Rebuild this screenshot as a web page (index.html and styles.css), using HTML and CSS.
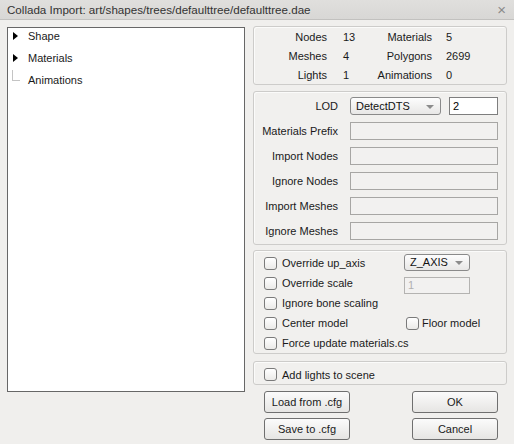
FILE: index.html
```html
<!DOCTYPE html>
<html>
<head>
<meta charset="utf-8">
<link rel="stylesheet" href="styles.css">
</head>
<body>
<div class="titlebar">
  <span class="title">Collada Import: art/shapes/trees/defaulttree/defaulttree.dae</span>
  <span class="close">×</span>
</div>
<div class="main">
  <div class="tree">
    <div class="node"><span class="arrow"></span><span class="label">Shape</span></div>
    <div class="node"><span class="arrow"></span><span class="label">Materials</span></div>
    <div class="node leaf"><span class="branch"></span><span class="label">Animations</span></div>
  </div>
  <div class="side">
    <div class="panel stats">
      <span class="sl c1">Nodes</span><span class="sv c2">13</span><span class="sl c3">Materials</span><span class="sv c4">5</span>
      <span class="sl c1">Meshes</span><span class="sv c2">4</span><span class="sl c3">Polygons</span><span class="sv c4">2699</span>
      <span class="sl c1">Lights</span><span class="sv c2">1</span><span class="sl c3">Animations</span><span class="sv c4">0</span>
    </div>
    <div class="panel opts">
      <div class="orow"><span class="olabel">LOD</span>
        <div class="lodfields"><div class="select lodsel"><span>DetectDTS</span><span class="caret"></span></div><div class="field enabled">2</div></div>
      </div>
      <div class="orow"><span class="olabel">Materials Prefix</span><div class="field"></div></div>
      <div class="orow"><span class="olabel">Import Nodes</span><div class="field"></div></div>
      <div class="orow"><span class="olabel">Ignore Nodes</span><div class="field"></div></div>
      <div class="orow"><span class="olabel">Import Meshes</span><div class="field"></div></div>
      <div class="orow"><span class="olabel">Ignore Meshes</span><div class="field"></div></div>
    </div>
    <div class="panel checks">
      <label class="cb"><span class="box"></span>Override up_axis</label>
      <div class="col2"><div class="select axissel"><span>Z_AXIS</span><span class="caret"></span></div></div>
      <label class="cb"><span class="box"></span>Override scale</label>
      <div class="col2"><div class="field scale">1</div></div>
      <label class="cb full"><span class="box"></span>Ignore bone scaling</label>
      <label class="cb"><span class="box"></span>Center model</label>
      <label class="cb floor"><span class="box"></span>Floor model</label>
      <label class="cb full"><span class="box"></span>Force update materials.cs</label>
    </div>
    <div class="panel lights">
      <label class="cb"><span class="box"></span>Add lights to scene</label>
    </div>
    <div class="buttons">
      <button class="btn">Load from .cfg</button>
      <button class="btn">OK</button>
      <button class="btn">Save to .cfg</button>
      <button class="btn">Cancel</button>
    </div>
  </div>
</div>
</body>
</html>
```

FILE: styles.css
```css
* { box-sizing: border-box; }
html, body {
  margin: 0;
  padding: 0;
  width: 514px;
  height: 444px;
  overflow: hidden;
  background: #f0efed;
  font-family: "Liberation Sans", Arial, sans-serif;
  font-size: 11px;
  color: #1a1a1a;
}
.titlebar {
  height: 20px;
  background: linear-gradient(#e0dfdd, #d8d7d5);
  border-bottom: 1px solid #c2c1bf;
  display: flex;
  align-items: center;
  justify-content: space-between;
  padding: 0 8px 0 7px;
}
.title { font-size: 11.6px; color: #333; }
.close { font-size: 15px; color: #8a8a8a; line-height: 1; }
.main {
  display: flex;
  padding-left: 7px;
  gap: 8px;
}
.tree {
  margin-top: 7px;
  width: 238px;
  height: 365px;
  background: #fff;
  border: 1px solid #676767;
  display: flex;
  flex-direction: column;
  gap: 6px;
}
.node {
  height: 16px;
  line-height: 16px;
  position: relative;
  padding-left: 20px;
}
.arrow {
  position: absolute;
  left: 5px;
  top: 4px;
  width: 0;
  height: 0;
  border-top: 4px solid transparent;
  border-bottom: 4px solid transparent;
  border-left: 5px solid #000;
}
.branch {
  position: absolute;
  left: 4px;
  top: -2px;
  width: 8px;
  height: 11px;
  border-left: 1px solid #c4c4c4;
  border-bottom: 1px solid #c4c4c4;
}
.side {
  margin-top: 6px;
  width: 254px;
  display: flex;
  flex-direction: column;
}
.panel {
  border: 1px solid #cdccca;
  border-radius: 3px;
  box-shadow: inset 1px 1px 0 #fbfbfa;
  background: #f1f0ee;
}
.stats {
  height: 59px;
  display: grid;
  grid-template-columns: 73px 35px 70px 1fr;
  grid-template-rows: 19px 19px 19px;
  line-height: 19px;
  padding-top: 1px;
}
.sl { text-align: right; }
.c2 { padding-left: 16px; }
.c4 { padding-left: 14px; }
.opts {
  margin-top: 6px;
  height: 154px;
  padding: 5px 7px 0 0;
  display: flex;
  flex-direction: column;
  gap: 7px;
}
.orow {
  display: flex;
  align-items: center;
  height: 18px;
}
.olabel {
  width: 84px;
  text-align: right;
  margin-right: 12px;
  flex-shrink: 0;
}
.field {
  width: 148px;
  height: 18px;
  border: 1px solid #a7a6a4;
  background: #f2f1f0;
  line-height: 16px;
  padding-left: 3px;
}
.field.enabled {
  width: 49px;
  background: #fff;
  border-color: #7e7e7e;
  color: #000;
}
.lodfields { display: flex; gap: 8px; }
.select {
  display: flex;
  align-items: center;
  justify-content: space-between;
  height: 18px;
  border: 1px solid #8a8a8a;
  border-radius: 3px;
  background: linear-gradient(#fdfdfd, #e8e7e6);
  padding: 0 6px 0 5px;
  color: #111;
}
.lodsel { width: 91px; }
.caret {
  width: 0;
  height: 0;
  border-left: 4px solid transparent;
  border-right: 4px solid transparent;
  border-top: 4px solid #8c8c8c;
  margin-top: 1px;
}
.checks {
  margin-top: 5px;
  height: 104px;
  padding: 2px 0 0 10px;
  display: grid;
  grid-template-columns: 140px 1fr;
  grid-auto-rows: 20px;
}
.cb {
  display: flex;
  align-items: center;
  gap: 5px;
}
.cb.full { grid-column: 1 / 3; }
.cb.floor { padding-left: 2px; gap: 3px; }
.box {
  width: 13px;
  height: 13px;
  border: 1px solid #7a7a7a;
  border-radius: 3px;
  background: linear-gradient(#ffffff, #ebeae8);
  flex-shrink: 0;
}
.col2 { display: flex; align-items: center; }
.axissel { width: 66px; height: 17px; margin-top: -2px; }
.field.scale {
  width: 66px;
  height: 17px;
  color: #b0b0b0;
  margin-top: 4px;
  border-color: #b4b3b1;
  line-height: 15px;
}
.lights {
  margin-top: 7px;
  height: 24px;
  padding: 3px 0 0 10px;
  display: flex;
  align-items: center;
}
.buttons {
  margin-top: 6px;
  display: grid;
  grid-template-columns: 86px 86px;
  justify-content: space-between;
  padding: 0 9px 0 11px;
  row-gap: 5px;
}
.btn {
  height: 22px;
  font-family: "Liberation Sans", Arial, sans-serif;
  font-size: 11px;
  color: #1a1a1a;
  border: 1px solid #6f6f6f;
  border-radius: 3px;
  background: linear-gradient(#fbfbfb, #e6e5e3);
  padding: 0;
}
```
